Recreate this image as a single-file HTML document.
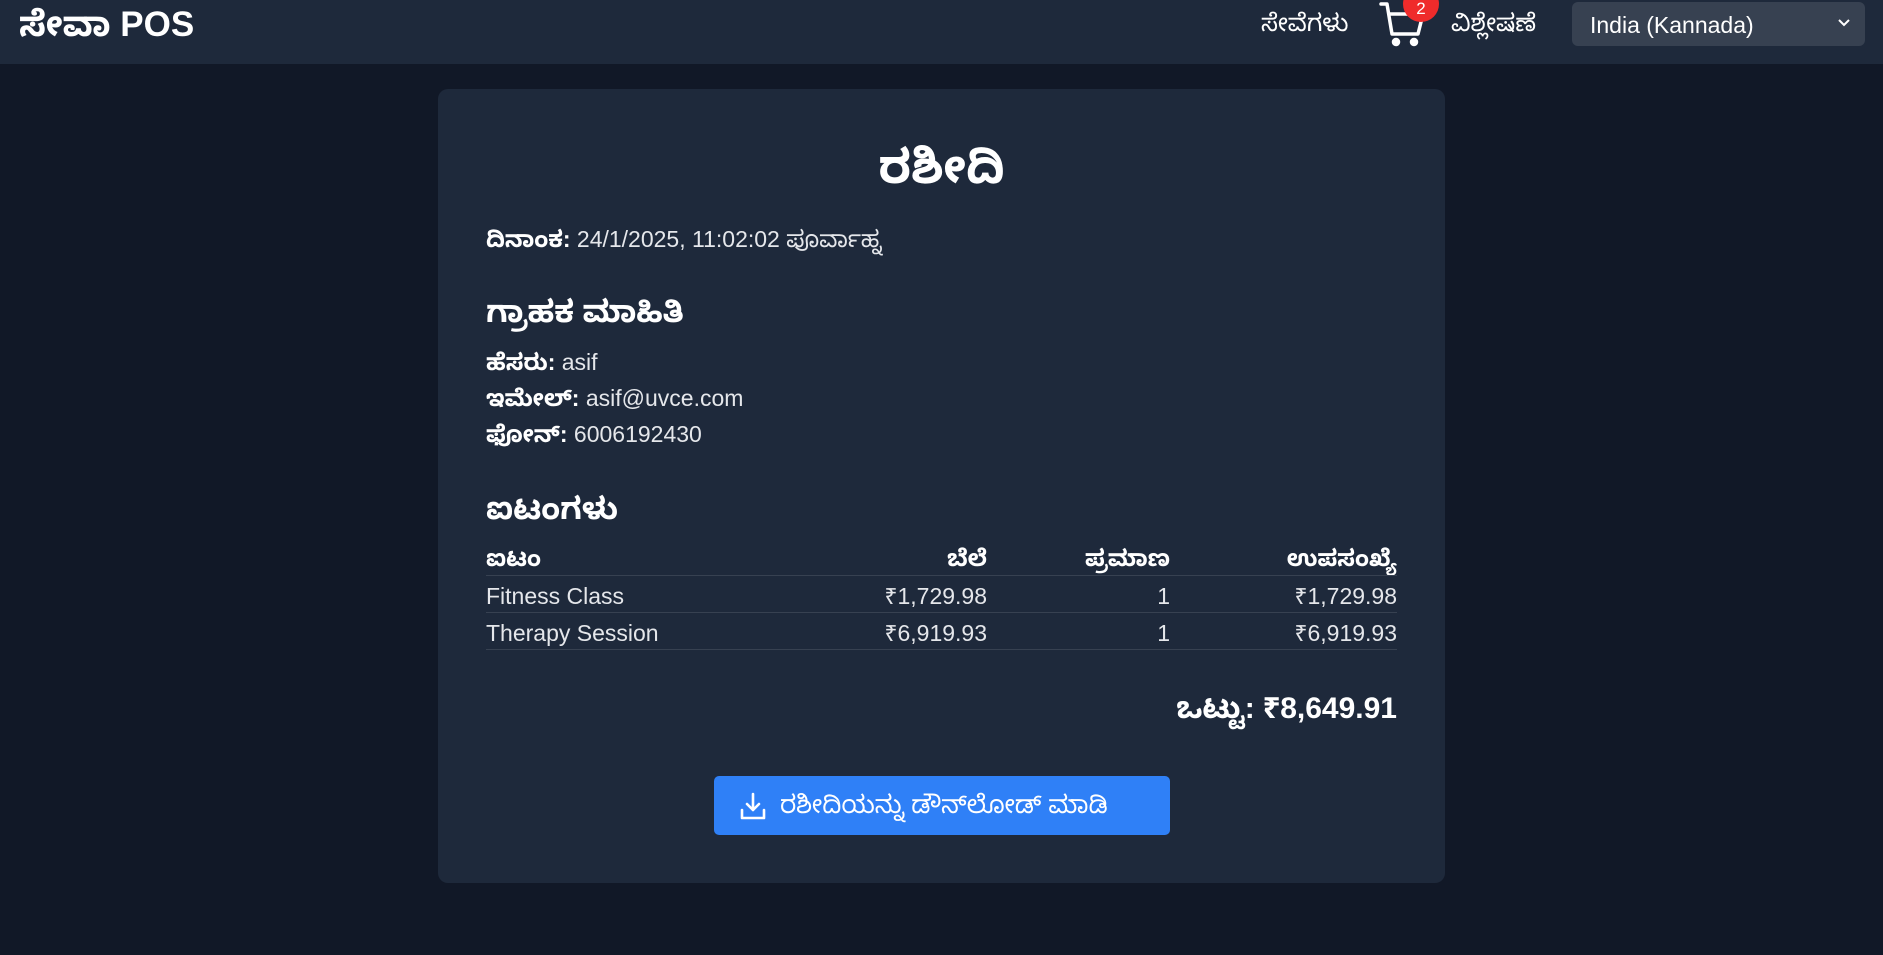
<!DOCTYPE html>
<html><head><meta charset="utf-8"><style>
*{box-sizing:border-box;margin:0;padding:0}
body{width:1883px;height:955px;background:#111827;font-family:"Liberation Sans","Noto Sans Kannada","Noto Sans CJK SC",sans-serif;color:#e5e7eb;position:relative;overflow:hidden}
.hdr{position:absolute;left:0;top:0;width:1883px;height:64px;background:#1e293b}
.logo{position:absolute;left:19px;top:5px;font-size:35px;font-weight:bold;color:#fff}
.nav{position:absolute;top:10px;font-size:24px;color:#fff}
.sel{position:absolute;left:1572px;top:2px;width:293px;height:44px;background:#374151;border-radius:6px;color:#fff;font-size:23px;padding:10px 0 0 18px}
.card{position:absolute;left:438px;top:89px;width:1007px;height:794px;background:#1e293b;border-radius:10px}
.t{position:absolute;white-space:nowrap}
.b{font-weight:bold;color:#fff}
.line{position:absolute;left:486px;width:911px;height:1px;background:#374151}
.r{text-align:right}
.btn{position:absolute;left:714px;top:776px;width:456px;height:59px;background:#2f80f7;border-radius:5px;color:#fff;font-size:25px}
</style></head><body>
<div class="hdr">
<div class="logo">ಸೇವಾ POS</div>
<div class="nav" style="left:1261px">ಸೇವೆಗಳು</div>
<svg style="position:absolute;left:1379px;top:0" width="50" height="48" viewBox="0 0 50 48" fill="none" stroke="#fff" stroke-width="3.5" stroke-linecap="round" stroke-linejoin="round"><path d="M2 4h6l5 30h26l5-20H11"/><circle cx="17" cy="42" r="2.5" fill="#fff"/><circle cx="35" cy="42" r="2.5" fill="#fff"/></svg>
<div style="position:absolute;left:1403px;top:-14px;width:36px;height:36px;border-radius:50%;background:#ef2b2b;color:#fff;font-size:17px;text-align:center;padding-top:13px">2</div>
<div class="nav" style="left:1451px">ವಿಶ್ಲೇಷಣೆ</div>
<div class="sel">India (Kannada)<svg style="position:absolute;right:14px;top:16px" width="14" height="10" viewBox="0 0 14 10" fill="none" stroke="#fff" stroke-width="2"><path d="M2 2l5 5 5-5"/></svg></div>
</div>
<div class="card"></div>
<div class="t b" style="left:0;width:1883px;text-align:center;top:139px;font-size:47px">ರಶೀದಿ</div>
<div class="t" style="left:486px;top:226px;font-size:23px"><b style="color:#fff">ದಿನಾಂಕ:</b> 24/1/2025, 11:02:02 ಪೂರ್ವಾಹ್ನ</div>
<div class="t b" style="left:486px;top:294px;font-size:31px">ಗ್ರಾಹಕ ಮಾಹಿತಿ</div>
<div class="t" style="left:486px;top:349px;font-size:23px"><b style="color:#fff">ಹೆಸರು:</b> asif</div>
<div class="t" style="left:486px;top:385px;font-size:23px"><b style="color:#fff">ಇಮೇಲ್:</b> asif@uvce.com</div>
<div class="t" style="left:486px;top:421px;font-size:23px"><b style="color:#fff">ಫೋನ್:</b> 6006192430</div>
<div class="t b" style="left:486px;top:491px;font-size:31px">ಐಟಂಗಳು</div>
<div class="t b" style="left:486px;top:545px;font-size:23px">ಐಟಂ</div>
<div class="t b r" style="right:896px;top:545px;font-size:23px">ಬೆಲೆ</div>
<div class="t b r" style="right:713px;top:545px;font-size:23px">ಪ್ರಮಾಣ</div>
<div class="t b r" style="right:486px;top:545px;font-size:23px">ಉಪಸಂಖ್ಯೆ</div>
<div class="line" style="top:575px"></div>
<div class="t" style="left:486px;top:583px;font-size:23px">Fitness Class</div>
<div class="t r" style="right:896px;top:583px;font-size:23px">₹1,729.98</div>
<div class="t r" style="right:713px;top:583px;font-size:23px">1</div>
<div class="t r" style="right:486px;top:583px;font-size:23px">₹1,729.98</div>
<div class="line" style="top:612px"></div>
<div class="t" style="left:486px;top:620px;font-size:23px">Therapy Session</div>
<div class="t r" style="right:896px;top:620px;font-size:23px">₹6,919.93</div>
<div class="t r" style="right:713px;top:620px;font-size:23px">1</div>
<div class="t r" style="right:486px;top:620px;font-size:23px">₹6,919.93</div>
<div class="line" style="top:649px"></div>
<div class="t b r" style="right:486px;top:692px;font-size:30px">ಒಟ್ಟು: ₹8,649.91</div>
<div class="btn"><svg style="position:absolute;left:26px;top:16px" width="26" height="28" viewBox="0 0 26 28" fill="none" stroke="#fff" stroke-width="2.6" stroke-linecap="round" stroke-linejoin="round"><path d="M13 2v16M7 12l6 6 6-6M2 18v8h22v-8"/></svg><span style="position:absolute;left:66px;top:15px;white-space:nowrap">ರಶೀದಿಯನ್ನು ಡೌನ್‌ಲೋಡ್ ಮಾಡಿ</span></div>
</body></html>
